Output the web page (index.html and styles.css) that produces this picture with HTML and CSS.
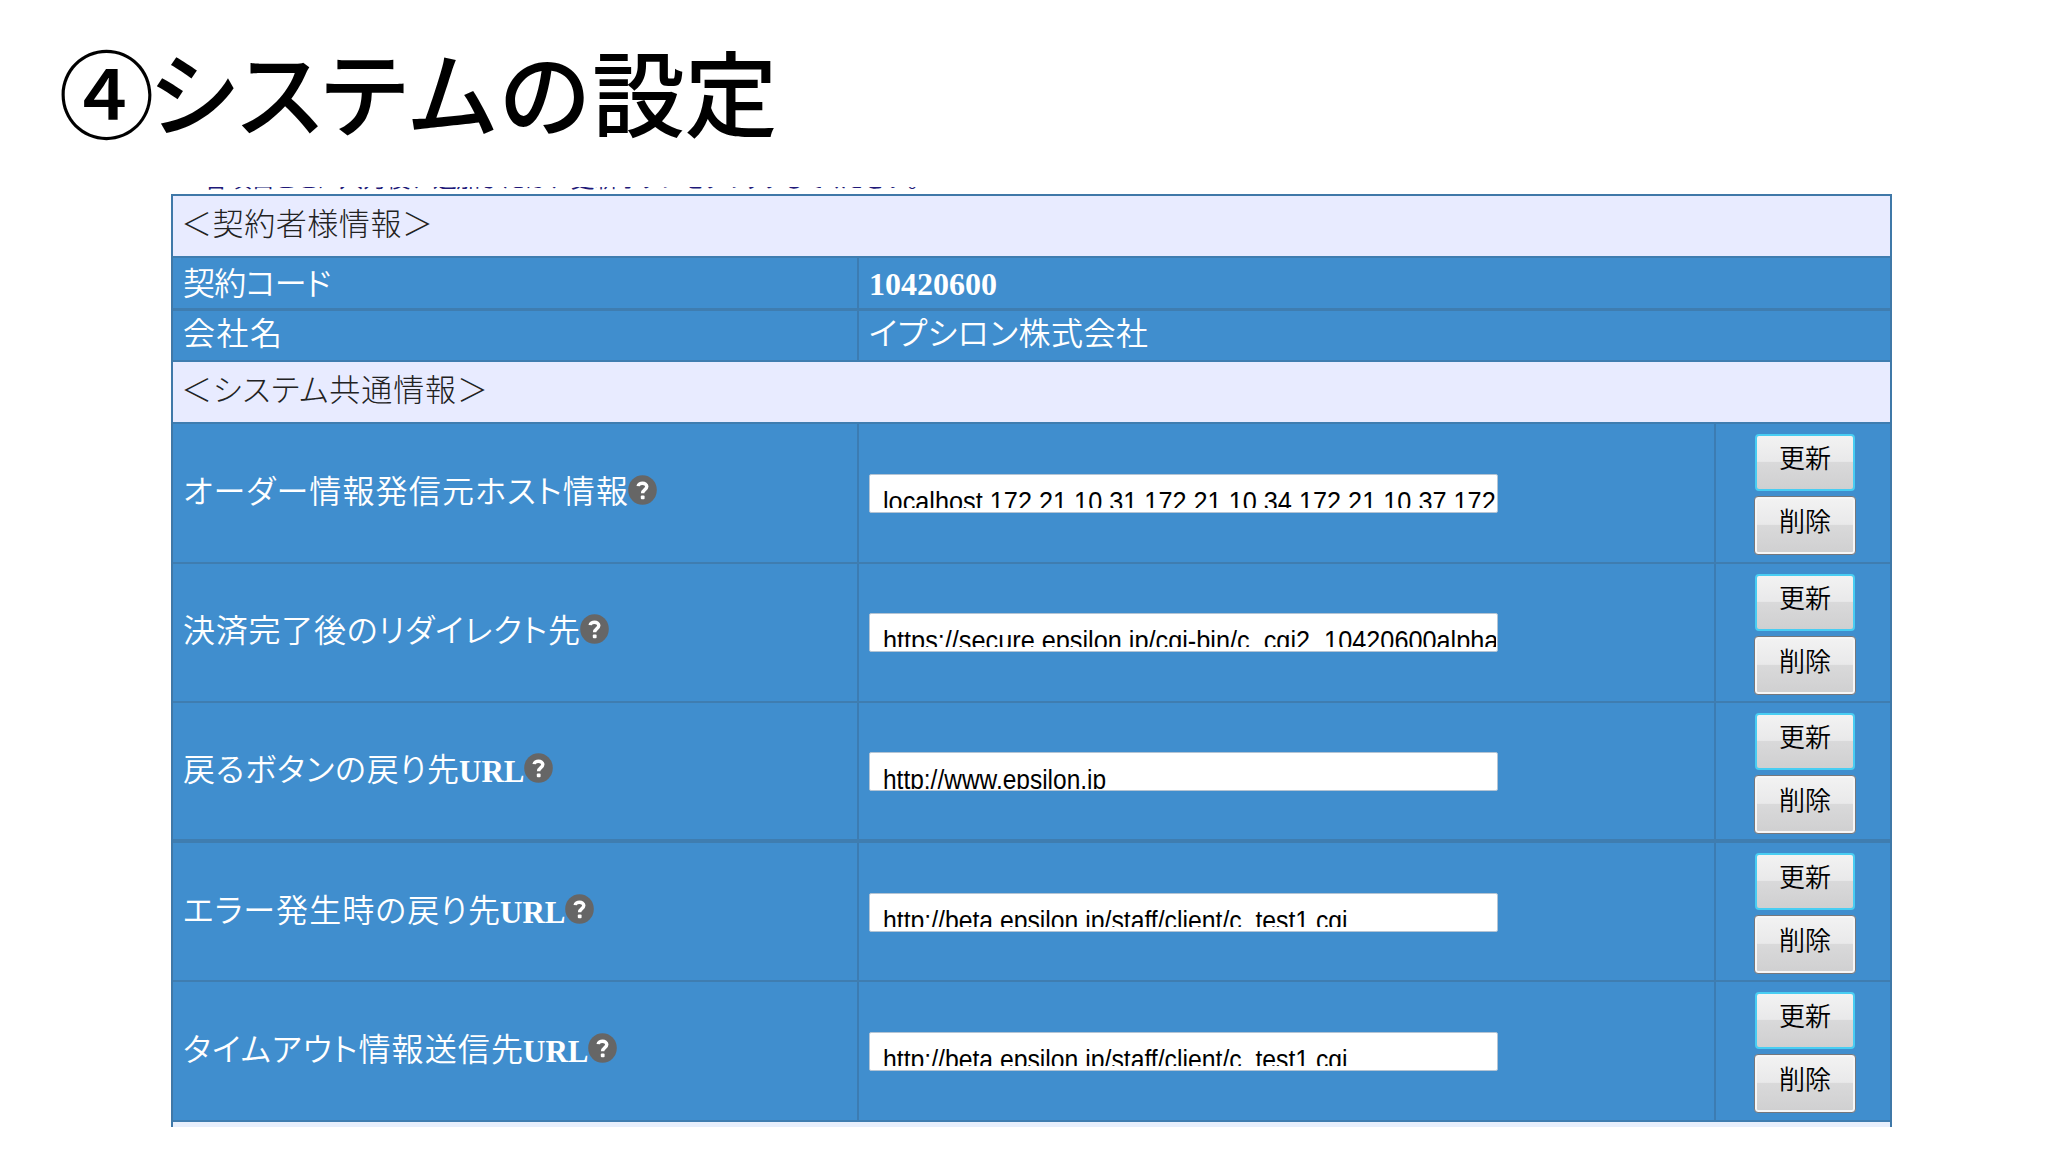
FILE: index.html
```html
<!DOCTYPE html>
<html lang="ja">
<head>
<meta charset="utf-8">
<title>システムの設定</title>
<link rel="stylesheet" href="styles.css">
</head>
<body>
<svg class="defs" width="0" height="0"><symbol id="help" viewBox="0 0 29 30"><ellipse cx="14.5" cy="15" rx="14.3" ry="14.8" fill="#666"/><path d="M10.2 11.2C10.4 7.4 18.8 7 18.8 11.6C18.8 14.6 14.6 14.6 14.6 18.2" fill="none" stroke="#fff" stroke-width="3.4"/><rect x="12.8" y="20.4" width="3.8" height="3.8" rx="1" fill="#fff"/></symbol></svg>
<h1 class="title"><span class="mark">④</span><span>シ</span><span>ス</span><span>テ</span><span>ム</span><span>の</span><span>設</span><span>定</span></h1>
<main class="panel">
  <p class="note"><span class="fit">各項目ごとに入力後<span class="pause">、</span>追加または<span class="pause">、</span>更新ボタンをクリックしてください。</span></p>
  <section class="sheet">
    <h2 class="section s1"><span class="fit">＜契約者様情報＞</span></h2>
    <div class="row info r1"><div class="cell"><span class="fit w-code">契約コード</span></div><div class="cell"><b class="num">10420600</b></div></div>
    <div class="row info r2"><div class="cell"><span class="fit w-name">会社名</span></div><div class="cell"><span class="fit w-company">イプシロン株式会社</span></div></div>
    <h2 class="section s2"><span class="fit">＜システム共通情報＞</span></h2>
    <div class="row item"><div class="cell"><span class="fit w1">オーダー情報発信元ホスト情報</span><svg class="help"><use href="#help"/></svg></div><div class="cell"><div class="field"><div class="clip"><span class="wide">localhost 172.21.10.31 172.21.10.34 172.21.10.37 172</span></div></div></div><div class="cell actions"><button class="btn update">更新</button><button class="btn delete">削除</button></div></div>
    <div class="row item"><div class="cell"><span class="fit w2">決済完了後のリダイレクト先</span><svg class="help"><use href="#help"/></svg></div><div class="cell"><div class="field"><div class="clip"><span class="wide">https://secure.epsilon.jp/cgi-bin/c_cgi2_10420600alpha</span></div></div></div><div class="cell actions"><button class="btn update">更新</button><button class="btn delete">削除</button></div></div>
    <div class="row item thick"><div class="cell"><span class="fit w3">戻るボタンの戻り先</span><b class="url">URL</b><svg class="help"><use href="#help"/></svg></div><div class="cell"><div class="field tall"><div class="clip"><span>http://www.epsilon.jp</span></div></div></div><div class="cell actions"><button class="btn update">更新</button><button class="btn delete">削除</button></div></div>
    <div class="row item"><div class="cell"><span class="fit w4">エラー発生時の戻り先</span><b class="url">URL</b><svg class="help"><use href="#help"/></svg></div><div class="cell"><div class="field"><div class="clip"><span class="mid">http://beta.epsilon.jp/staff/client/c_test1.cgi</span></div></div></div><div class="cell actions"><button class="btn update">更新</button><button class="btn delete">削除</button></div></div>
    <div class="row item"><div class="cell"><span class="fit w5">タイムアウト情報送信先</span><b class="url">URL</b><svg class="help"><use href="#help"/></svg></div><div class="cell"><div class="field"><div class="clip"><span class="mid">http://beta.epsilon.jp/staff/client/c_test1.cgi</span></div></div></div><div class="cell actions"><button class="btn update">更新</button><button class="btn delete">削除</button></div></div>
    <div class="tail"></div>
  </section>
</main>
</body>
</html>
```
FILE: styles.css
```css
* { box-sizing: border-box; }
body {
  margin: 0;
  width: 2048px;
  height: 1152px;
  overflow: hidden;
  background: #fff;
  font-family: "Noto Sans CJK JP", sans-serif;
  font-weight: 300;
}
.defs { display: block; height: 0; }
.title {
  display: grid;
  grid-template-columns: 89px 87px 84px 85px 91px 94px 93px 92px;
  margin: 0;
  padding-left: 62px;
  height: 187px;
  font-size: 93px;
  font-weight: 500;
  line-height: 179px;
  color: #000;
}
.title span { display: flex; justify-content: center; }
.title .mark { font-size: 96px; }
.panel { width: 1721px; margin-left: 171px; }
.note {
  display: flex;
  align-items: flex-end;
  margin: 0 0 3px;
  padding-left: 33px;
  height: 4px;
  overflow: hidden;
  color: #201878;
  font-size: 24px;
  font-weight: 350;
  line-height: 28px;
}
.note .fit { width: 714px; letter-spacing: -1.2px; }
.pause { letter-spacing: 10px; }
.fit {
  display: inline-block;
  white-space: nowrap;
  font-feature-settings: "palt";
  text-align: justify;
  text-align-last: justify;
}
.sheet {
  border: 2px solid #3f78a8;
  border-bottom: 0;
  background: #408ece;
}
.section {
  display: flex;
  margin: 0;
  padding-left: 8px;
  background: #e8ebff;
  border-bottom: 2px solid #3f7db0;
  color: #222;
  font-size: 31px;
  font-weight: 300;
}
.section { height: 62px; line-height: 51px; }
.s1 .fit { width: 252px; }
.s2 .fit { width: 307px; }
.row {
  display: grid;
  grid-template-columns: 686px 1fr 174px;
  border-bottom: 2px solid #3f7db0;
  color: #fff;
  font-size: 32px;
  font-weight: 350;
}
.info { grid-template-columns: 686px 1fr; }
.r1 { height: 53px; border-bottom-width: 3px; }
.r2 { height: 51px; }
.item { height: 139.6px; }
.thick { border-bottom-width: 4px; }
.cell {
  display: flex;
  align-items: center;
  padding: 0 0 4px 10px;
  border-right: 2px solid #3c7cb2;
}
.cell:last-child { border-right: 0; }
.info .cell { line-height: 38px; padding-bottom: 7px; }
.r2 .cell { padding-bottom: 9px; }
.w-code { width: 147px; letter-spacing: -0.8px; }
.w-name { width: 99px; }
.w-company { width: 279px; }
.w1, .w2, .w3, .w4, .w5 { margin-top: -4px; }
.w1 { width: 445px; }
.w2 { width: 397px; }
.w3 { width: 276px; }
.w4 { width: 317px; }
.w5 { width: 340px; }
.num { font: bold 32px "Liberation Serif", serif; padding-top: 8px; }
.url {
  width: 65px;
  font: bold 31px "Liberation Serif", serif;
  padding-top: 6px;
}
.help { width: 29px; height: 30px; flex: none; margin-bottom: 2px; }
.field {
  width: 629px;
  height: 39px;
  margin-top: 5px;
  padding: 0 1px 4px 13px;
  border: 1px solid #b4c4d4;
  border-radius: 2px;
  background: #fff;
  color: #000;
}
.clip { height: 33px; overflow: hidden; }
.tall .clip { height: 36px; }
.clip span {
  display: block;
  width: max-content;
  font: 27.5px/32px "Liberation Sans", sans-serif;
  padding-top: 11px;
  transform: scaleX(.89);
  transform-origin: 0 0;
}
.clip .wide { transform: scaleX(.919); }
.clip .mid { transform: scaleX(.9); }
.actions {
  flex-direction: column;
  gap: 5px;
  align-items: center;
  justify-content: flex-start;
  padding: 10px 0 0 4px;
}
.btn {
  width: 100px;
  height: 57px;
  padding: 0 0 11px;
  border-radius: 4px;
  font: 350 26px/40px "Noto Sans CJK JP", sans-serif;
  color: #000;
  background: #d4d4d5 linear-gradient(#f3f3f3 0%, #e9e9ea 48%, #d9d9da 50%, #cfcfd0 100%) border-box;
}
.update { border: 2px solid #48cdf2; }
.delete { width: 102px; height: 59px; border: 1px solid #75777c; box-shadow: inset 0 0 0 2px #f6f6f6; }
.tail { height: 5px; background: #e8effc; }
```
